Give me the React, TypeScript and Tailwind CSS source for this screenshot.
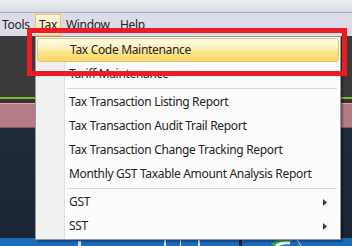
import React from "react";

const Arrow = () => (
  <svg width="4" height="7" viewBox="0 0 4 7" className="block">
    <path d="M0 0 L4 3.5 L0 7 Z" fill="#3c3c3c" />
  </svg>
);

type Item = { label: string; sub?: boolean; active?: boolean } | "sep";

const items: Item[] = [
  { label: "Tax Code Maintenance", active: true },
  { label: "Tariff Maintenance" },
  "sep",
  { label: "Tax Transaction Listing Report" },
  { label: "Tax Transaction Audit Trail Report" },
  { label: "Tax Transaction Change Tracking Report" },
  { label: "Monthly GST Taxable Amount Analysis Report" },
  "sep",
  { label: "GST", sub: true },
  { label: "SST", sub: true },
];

export default function App() {
  return (
    <div className="relative w-[352px] h-[246px] overflow-hidden font-['Segoe_UI','Noto_Sans',sans-serif] text-[12px] tracking-[-0.32px] text-[#232323]">
      <div className="flex flex-col h-full">
        <div className="h-[12px] bg-[linear-gradient(#eef0f5,#d9dbe4)]" />
        <div className="h-px bg-[#a8aab8]" />
        <div className="h-[23px] bg-[#dcdce8] flex items-stretch">
          <div className="pl-[2px] w-[35px] flex items-center">Tools</div>
          <div className="w-[26px] mt-[1px] border border-[#f0c27c] bg-[linear-gradient(#fff3d6,#fde4ad)] flex items-center justify-center">Tax</div>
          <div className="pl-[5px] w-[59px] flex items-center">Window</div>
          <div className="flex items-center">Help</div>
        </div>
        <div className="h-[61px] bg-[#3a3a3a]" />
        <div className="h-[2px] bg-[#7cb83e]" />
        <div className="h-[4px] bg-[#343434]" />
        <div className="h-px bg-[#e8a4ae]" />
        <div className="h-[23px] bg-[#b47c84]" />
        <div className="h-px bg-[#7a5a66]" />
        <div className="flex-1 bg-[linear-gradient(#1f2b38,#1a2634)]" />
        <div className="h-[8px] bg-[#1b6cbf] relative">
          <div className="absolute left-[164px] top-[1px] w-[36px] h-[7px] border-l-2 border-r-2 border-t border-[#cfe4f7]" />
          <div className="absolute left-[180px] top-[1px] w-px h-[7px] bg-[#cfe4f7]" />
          <div className="absolute left-[239px] top-0 w-[3px] h-[8px] bg-[#13263a]" />
          <svg className="absolute left-[268px] top-0" width="34" height="8" viewBox="0 0 34 8">
            <path d="M4 8 Q12 0 24 2" stroke="#3aa64a" strokeWidth="3" fill="none" />
            <path d="M8 8 Q14 4 22 5" stroke="#f2f6f2" strokeWidth="3" fill="none" />
            <path d="M28 0 L33 8" stroke="#cfe4f7" strokeWidth="1" fill="none" />
          </svg>
          <div className="absolute left-[78px] top-[3px] w-[3px] h-[5px] bg-[#cfe4f7]" />
        </div>
      </div>

      {/* Dropdown menu */}
      <div className="absolute left-[35px] top-[36px] w-[306px] border border-[#979797] p-px bg-[linear-gradient(to_right,#f1f1f1_0,#f1f1f1_28px,#e0e0e0_28px,#e0e0e0_29px,#fcfcfc_29px)] shadow-[2px_2px_2px_rgba(0,0,0,0.35)]">
        {items.map((it, i) =>
          it === "sep" ? (
            <div key={i} className="h-[4px] flex items-center pl-[30px] pr-[2px]">
              <div className="h-px w-full bg-[#d7d7d7]" />
            </div>
          ) : (
            <div
              key={i}
              className={
                "h-[24px] flex items-center pl-[32px] pr-[12px] rounded-[3px] " +
                (it.active
                  ? "border border-[#e2c46c] bg-[linear-gradient(#fffbe6_0%,#fff1bf_40%,#fde38a_60%,#fcd867_100%)] pl-[31px] pr-[11px]"
                  : "")
              }
            >
              <span className="flex-1">{it.label}</span>
              {it.sub && <Arrow />}
            </div>
          )
        )}
      </div>

      {/* Red annotation rectangle */}
      <div className="absolute left-[27px] top-[28px] w-[320px] h-[48px] border-[5px] border-[#ec1c24]" />
    </div>
  );
}
